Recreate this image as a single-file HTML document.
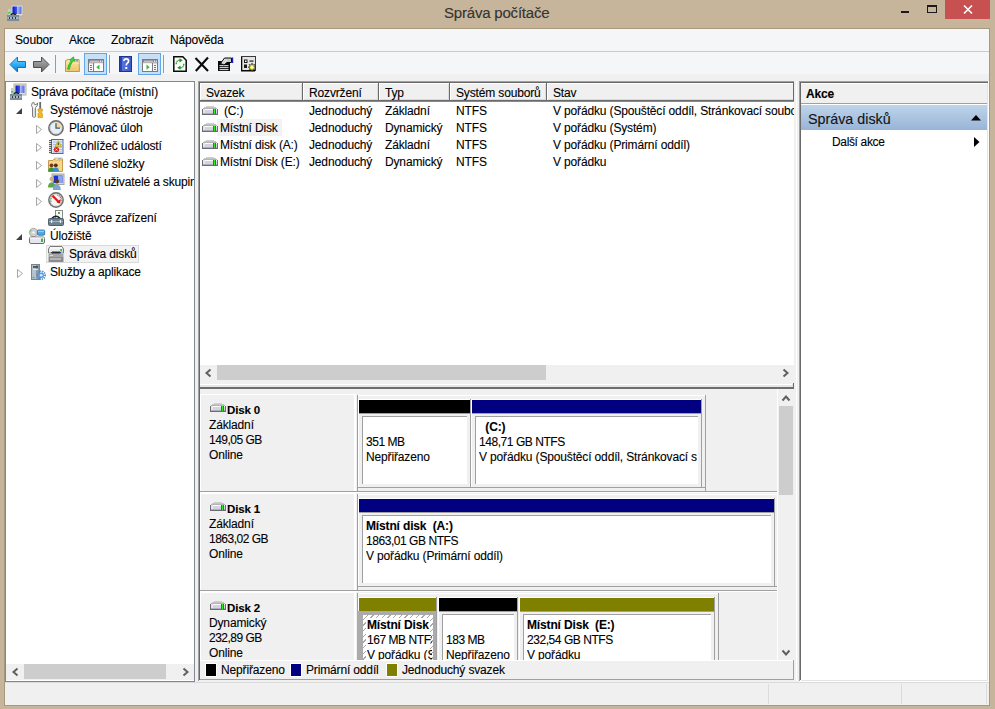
<!DOCTYPE html>
<html><head><meta charset="utf-8"><style>
*{box-sizing:border-box;margin:0;padding:0}
html,body{width:995px;height:709px;overflow:hidden}
body{background:#C6B59A;font-family:"Liberation Sans",sans-serif;font-size:11.5px;color:#000;position:relative}
.a{position:absolute}
.t{position:absolute;white-space:nowrap;line-height:16px;font-size:12px;letter-spacing:-0.15px;color:#000;-webkit-text-stroke:0.1px #000}
.b{font-weight:bold}
svg{position:absolute;overflow:visible}
</style></head><body>
<div class="t" style="left:444px;top:3px;font-size:15px;letter-spacing:-0.2px;line-height:20px;color:#363636">Správa počítače</div>
<svg style="left:7px;top:5px" width="16" height="16" viewBox="0 0 16 16">
<defs><linearGradient id="scra" x1="0" y1="0" x2="1" y2="0"><stop offset="0" stop-color="#0A10C8"/><stop offset="0.45" stop-color="#3A50E8"/><stop offset="0.55" stop-color="#A8B8F4"/><stop offset="1" stop-color="#5068E8"/></linearGradient></defs>
<rect x="4" y="0" width="12" height="11" fill="#E2E0D2"/><rect x="4" y="0" width="12" height="11" fill="none" stroke="#B4B2A6" stroke-width="1"/>
<rect x="5.5" y="1.5" width="9" height="7.5" fill="url(#scra)"/>
<path d="M3.5 10 Q6 7.3 9 10" stroke="#1A1A1A" stroke-width="1.4" fill="none"/>
<rect x="0" y="10" width="12" height="6" fill="#7C8C98"/><rect x="0.5" y="12" width="11" height="2" fill="#A8B6C0"/>
<rect x="2" y="12" width="1" height="2" fill="#303A44"/><rect x="5" y="12" width="1" height="2" fill="#303A44"/><rect x="8" y="12" width="1" height="2" fill="#303A44"/>
<rect x="1" y="4" width="2.5" height="6" fill="#C8CCCC"/><rect x="1" y="7" width="2.5" height="1.6" fill="#38E038"/></svg>
<div class="a" style="left:901px;top:11px;width:8px;height:2px;background:#1A1A1A"></div>
<div class="a" style="left:927px;top:5px;width:10px;height:8px;border:1px solid #1A1A1A;border-top-width:2px"></div>
<div class="a" style="left:945px;top:0px;width:45px;height:19px;background:#C75050"></div>
<svg style="left:963px;top:5px" width="10" height="9" viewBox="0 0 10 9"><path d="M1 0.5 L9 8.5 M9 0.5 L1 8.5" stroke="#fff" stroke-width="1.6"/></svg>
<div class="a" style="left:4px;top:28px;width:986px;height:678px;border:1px solid #A8987C;background:#F0F0F0"></div>
<div class="a" style="left:5px;top:29px;width:984px;height:22px;background:#F5F6F7"></div>
<div class="t" style="left:15px;top:32px;">Soubor</div>
<div class="t" style="left:69px;top:32px;">Akce</div>
<div class="t" style="left:111px;top:32px;">Zobrazit</div>
<div class="t" style="left:170px;top:32px;">Nápověda</div>
<div class="a" style="left:5px;top:51px;width:984px;height:1px;background:#C9CACB"></div>
<div class="a" style="left:5px;top:52px;width:984px;height:22px;background:#F5F6F7"></div>
<div class="a" style="left:55px;top:55px;width:1px;height:18px;background:#9A9A9A"></div>
<div class="a" style="left:109px;top:55px;width:1px;height:18px;background:#9A9A9A"></div>
<div class="a" style="left:163px;top:55px;width:1px;height:18px;background:#9A9A9A"></div>
<div class="a" style="left:84px;top:53px;width:23px;height:22px;background:#C8E0F7;border:1px solid #62A6EA"></div>
<div class="a" style="left:138px;top:53px;width:23px;height:22px;background:#C8E0F7;border:1px solid #62A6EA"></div>
<svg style="left:9px;top:56px" width="18" height="17" viewBox="0 0 18 17">
<defs><linearGradient id="gb" x1="0" y1="0" x2="0" y2="1"><stop offset="0" stop-color="#7ED6FF"/><stop offset="0.5" stop-color="#2EB0F8"/><stop offset="1" stop-color="#0A70D0"/></linearGradient></defs>
<path d="M1 8.5 L8.5 1 L8.5 5.5 L16.5 5.5 L16.5 11.5 L8.5 11.5 L8.5 16 Z" fill="url(#gb)" stroke="#1A6CC0" stroke-width="1" stroke-linejoin="round"/></svg>
<svg style="left:32px;top:56px" width="18" height="17" viewBox="0 0 18 17">
<defs><linearGradient id="gg" x1="0" y1="0" x2="0" y2="1"><stop offset="0" stop-color="#B4B4B4"/><stop offset="0.5" stop-color="#909090"/><stop offset="1" stop-color="#6A6A6A"/></linearGradient></defs>
<path d="M17 8.5 L9.5 1 L9.5 5.5 L1.5 5.5 L1.5 11.5 L9.5 11.5 L9.5 16 Z" fill="url(#gg)" stroke="#4E4E4E" stroke-width="1" stroke-linejoin="round"/></svg>
<svg style="left:65px;top:56px" width="15" height="16" viewBox="0 0 15 16">
<defs><linearGradient id="gf" x1="0" y1="0" x2="0" y2="1"><stop offset="0" stop-color="#FBE7AE"/><stop offset="1" stop-color="#EBC466"/></linearGradient></defs>
<path d="M0.5 4.5 L3 3.5 L14 3.5 L14.5 15.5 L0.5 15.5 Z" fill="url(#gf)" stroke="#BF9A48" stroke-width="1"/>
<rect x="1" y="7" width="13" height="1" fill="#F8E2A0"/><rect x="10.5" y="4.2" width="2.5" height="1.2" fill="#5A8CE0"/>
<path d="M2.5 13 Q3.5 8 6 5 L4.8 3.8 L8.5 0.8 L9.8 5.4 L8 4.8 Q5.5 8.5 4.2 13.5 Z" fill="#3ECF3A" stroke="#20A020" stroke-width="0.6"/></svg>
<svg style="left:88px;top:59px" width="16" height="13" viewBox="0 0 16 13">
<rect x="0.5" y="0.5" width="15" height="12" fill="#F6F6F6" stroke="#7C7C80"/>
<rect x="1" y="1" width="14" height="2.4" fill="#8A8A90"/><rect x="2" y="1.8" width="9" height="0.8" fill="#E8E8E8"/>
<rect x="12" y="1.6" width="1" height="1.2" fill="#fff"/><rect x="13.8" y="1.6" width="1" height="1.2" fill="#fff"/>
<rect x="1" y="3.4" width="14" height="1" fill="#A8A8AC"/><rect x="2" y="6" width="2" height="1" fill="#4A7EC0"/><rect x="2" y="8" width="2" height="1" fill="#4A7EC0"/><rect x="2" y="10" width="2" height="1" fill="#4A7EC0"/>
<rect x="5" y="4" width="1.2" height="8.5" fill="#7C7C80"/><rect x="6.2" y="4.4" width="8.8" height="7.6" fill="#fff"/><path d="M11.5 5.6 L8.3 8.2 L11.5 10.8 Z" fill="#3CB83C"/></svg>
<svg style="left:142px;top:59px" width="16" height="13" viewBox="0 0 16 13">
<rect x="0.5" y="0.5" width="15" height="12" fill="#F6F6F6" stroke="#7C7C80"/>
<rect x="1" y="1" width="14" height="2.4" fill="#8A8A90"/><rect x="2" y="1.8" width="9" height="0.8" fill="#E8E8E8"/>
<rect x="12" y="1.6" width="1" height="1.2" fill="#fff"/><rect x="13.8" y="1.6" width="1" height="1.2" fill="#fff"/>
<rect x="1" y="3.4" width="14" height="1" fill="#A8A8AC"/><rect x="12" y="6" width="2" height="1" fill="#4A7EC0"/><rect x="12" y="8" width="2" height="1" fill="#4A7EC0"/><rect x="12" y="10" width="2" height="1" fill="#4A7EC0"/>
<rect x="9.8" y="4" width="1.2" height="8.5" fill="#7C7C80"/><rect x="1" y="4.4" width="8.8" height="7.6" fill="#fff"/><path d="M4.5 5.6 L7.7 8.2 L4.5 10.8 Z" fill="#3CB83C"/></svg>
<svg style="left:119px;top:56px" width="13" height="16" viewBox="0 0 13 16">
<defs><linearGradient id="gh" x1="0" y1="0" x2="1" y2="0"><stop offset="0" stop-color="#5C7CE8"/><stop offset="1" stop-color="#3A58C8"/></linearGradient></defs>
<rect x="0" y="0" width="13" height="16" fill="#1E3290"/><rect x="1" y="1" width="11" height="14" fill="url(#gh)"/><rect x="1" y="1" width="2" height="14" fill="#2A44B0"/>
<path d="M5 5 Q5 2.8 7.2 2.8 Q9.6 2.8 9.6 5 Q9.6 6.4 8.2 7.2 Q7.3 7.8 7.3 9.6" fill="none" stroke="#fff" stroke-width="1.7"/><rect x="6.3" y="11" width="2" height="2" fill="#fff"/></svg>
<svg style="left:173px;top:56px" width="14" height="16" viewBox="0 0 14 16">
<path d="M0.8 0.8 L9.8 0.8 L13.2 4.2 L13.2 15.2 L0.8 15.2 Z" fill="#fff" stroke="#0A0A0A" stroke-width="1.5"/>
<path d="M3.2 8.2 Q3.2 4.2 7 4.2" fill="none" stroke="#1E9A1E" stroke-width="1.3" stroke-dasharray="1.6 0.7"/><path d="M6.5 2.2 L9.8 4.3 L6.5 6.4 Z" fill="#1E9A1E"/>
<path d="M10.8 7.8 Q10.8 11.8 7 11.8" fill="none" stroke="#1E9A1E" stroke-width="1.3" stroke-dasharray="1.6 0.7"/><path d="M7.5 9.6 L4.2 11.7 L7.5 13.8 Z" fill="#1E9A1E"/></svg>
<svg style="left:195px;top:57px" width="14" height="15" viewBox="0 0 14 15"><path d="M0.5 1 L13 14 M13 0.5 L0.8 14" stroke="#0A0A0A" stroke-width="2.1"/></svg>
<svg style="left:218px;top:56px" width="16" height="16" viewBox="0 0 16 16">
<rect x="0" y="5" width="12" height="10" fill="#0A0A0A"/><rect x="1.5" y="9" width="9" height="1.2" fill="#C8C8C8"/>
<rect x="1.5" y="11.2" width="9" height="0.9" fill="#fff"/><rect x="1.5" y="13.2" width="9" height="0.9" fill="#fff"/>
<path d="M2.5 7.5 L6.5 2 L13.5 2 L13.5 6.5 L9 6.5 L6 9 Z" fill="#C8C8C8" stroke="#0A0A0A" stroke-width="1"/>
<path d="M4 7 L7.5 3 M6 7.5 L9 4" stroke="#fff" stroke-width="0.7"/>
<rect x="14" y="1.5" width="1.2" height="5.5" fill="#1A1AC8"/></svg>
<svg style="left:241px;top:56px" width="16" height="16" viewBox="0 0 16 16">
<rect x="0.5" y="0.5" width="14" height="14" fill="#E4E4E4" stroke="#3A3A3A" stroke-width="1"/>
<rect x="0" y="14" width="14" height="1.5" fill="#0A0A0A"/><rect x="0" y="1" width="1.3" height="14" fill="#0A0A0A"/>
<rect x="3" y="3.5" width="3.5" height="3.5" fill="#1A1A1A"/><rect x="4" y="4.5" width="1.5" height="1.5" fill="#fff"/><rect x="8.5" y="4.5" width="4" height="1.2" fill="#1A1A1A"/>
<rect x="3" y="8.5" width="3" height="3.5" fill="#1A1A1A"/>
<path d="M11 7 L11.8 9 L13.8 8.4 L13 10.4 L15 11.2 L13 12.1 L13.8 14 L11.8 13.4 L11 15.5 L10.2 13.4 L8.2 14 L9 12.1 L7 11.2 L9 10.4 L8.2 8.4 L10.2 9 Z" fill="#F0E81C" stroke="#1A1A1A" stroke-width="0.6"/><circle cx="11" cy="11.2" r="1.2" fill="#fff"/></svg>
<div class="a" style="left:5px;top:81px;width:190px;height:601px;border:1px solid #828790;background:#fff"></div>
<div class="a" style="left:46px;top:245px;width:93px;height:18px;background:#F2F2F2;border:1px solid #DADADA"></div>
<div class="a" style="left:6px;top:82px;width:188px;height:580px;overflow:hidden">
<div class="t" style="left:25px;top:2px">Správa počítače (místní)</div>
<div class="t" style="left:44px;top:20px">Systémové nástroje</div>
<div class="t" style="left:63px;top:38px">Plánovač úloh</div>
<div class="t" style="left:63px;top:56px">Prohlížeč událostí</div>
<div class="t" style="left:63px;top:74px">Sdílené složky</div>
<div class="t" style="left:63px;top:92px">Místní uživatelé a skupiny</div>
<div class="t" style="left:63px;top:110px">Výkon</div>
<div class="t" style="left:63px;top:128px">Správce zařízení</div>
<div class="t" style="left:44px;top:146px">Úložiště</div>
<div class="t" style="left:63px;top:164px">Správa disků</div>
<div class="t" style="left:44px;top:182px">Služby a aplikace</div>
</div>
<svg style="left:16px;top:108px" width="6" height="6" viewBox="0 0 6 6"><path d="M6 0 L6 6 L0 6 Z" fill="#404040"/></svg>
<svg style="left:16px;top:234px" width="6" height="6" viewBox="0 0 6 6"><path d="M6 0 L6 6 L0 6 Z" fill="#404040"/></svg>
<svg style="left:36px;top:125px" width="6" height="9" viewBox="0 0 6 9"><path d="M0.5 0.5 L5.5 4.5 L0.5 8.5 Z" fill="none" stroke="#A6A6A6" stroke-width="1"/></svg>
<svg style="left:36px;top:143px" width="6" height="9" viewBox="0 0 6 9"><path d="M0.5 0.5 L5.5 4.5 L0.5 8.5 Z" fill="none" stroke="#A6A6A6" stroke-width="1"/></svg>
<svg style="left:36px;top:161px" width="6" height="9" viewBox="0 0 6 9"><path d="M0.5 0.5 L5.5 4.5 L0.5 8.5 Z" fill="none" stroke="#A6A6A6" stroke-width="1"/></svg>
<svg style="left:36px;top:179px" width="6" height="9" viewBox="0 0 6 9"><path d="M0.5 0.5 L5.5 4.5 L0.5 8.5 Z" fill="none" stroke="#A6A6A6" stroke-width="1"/></svg>
<svg style="left:36px;top:197px" width="6" height="9" viewBox="0 0 6 9"><path d="M0.5 0.5 L5.5 4.5 L0.5 8.5 Z" fill="none" stroke="#A6A6A6" stroke-width="1"/></svg>
<svg style="left:17px;top:269px" width="6" height="9" viewBox="0 0 6 9"><path d="M0.5 0.5 L5.5 4.5 L0.5 8.5 Z" fill="none" stroke="#A6A6A6" stroke-width="1"/></svg>
<svg style="left:10px;top:84px" width="16" height="16" viewBox="0 0 16 16">
<defs><linearGradient id="scrb" x1="0" y1="0" x2="1" y2="0"><stop offset="0" stop-color="#0A10C8"/><stop offset="0.45" stop-color="#3A50E8"/><stop offset="0.55" stop-color="#A8B8F4"/><stop offset="1" stop-color="#5068E8"/></linearGradient></defs>
<rect x="4" y="0" width="12" height="11" fill="#E2E0D2"/><rect x="4" y="0" width="12" height="11" fill="none" stroke="#B4B2A6" stroke-width="1"/>
<rect x="5.5" y="1.5" width="9" height="7.5" fill="url(#scrb)"/>
<path d="M3.5 10 Q6 7.3 9 10" stroke="#1A1A1A" stroke-width="1.4" fill="none"/>
<rect x="0" y="10" width="12" height="6" fill="#7C8C98"/><rect x="0.5" y="12" width="11" height="2" fill="#A8B6C0"/>
<rect x="2" y="12" width="1" height="2" fill="#303A44"/><rect x="5" y="12" width="1" height="2" fill="#303A44"/><rect x="8" y="12" width="1" height="2" fill="#303A44"/>
<rect x="1" y="4" width="2.5" height="6" fill="#C8CCCC"/><rect x="1" y="7" width="2.5" height="1.6" fill="#38E038"/></svg>
<svg style="left:31px;top:102px" width="12" height="16" viewBox="0 0 12 16">
<path d="M1.2 1 Q-0.3 3.8 1.5 5.6 L1.5 14.6 Q3 16.2 4.6 14.6 L4.6 5.6 Q7.2 4 6.6 0.8 L5.2 2.8 L3.4 2.4 L2.8 0.2 Z" fill="#F4F4F4" stroke="#6E6E6E" stroke-width="0.9"/>
<rect x="2.6" y="6.5" width="1" height="7.5" fill="#C8C8C8"/>
<rect x="8.3" y="0" width="1.8" height="7" fill="#6A6A6A"/><rect x="8.3" y="6" width="1.8" height="1" fill="#8AA0D0"/>
<path d="M7 7 L11.4 7 L11.4 9 L10.4 10 L10.4 10.6 L11.4 11.6 L11.4 15.6 L7 15.6 L7 11.6 L8 10.6 L8 10 L7 9 Z" fill="#F2BC18" stroke="#C08800" stroke-width="0.6"/></svg>
<svg style="left:48px;top:120px" width="16" height="16" viewBox="0 0 16 16">
<circle cx="8" cy="8" r="7.1" fill="#E6EEF6" stroke="#6E6E6E" stroke-width="1.6"/>
<circle cx="8" cy="8" r="6" fill="none" stroke="#B8B8B8" stroke-width="0.6"/>
<path d="M8 2.2 A5.8 5.8 0 0 1 13.8 8 L8 8 Z" fill="#F0DC9C"/>
<path d="M8 3.2 L8 8.2 L12 8.2" fill="none" stroke="#405878" stroke-width="1.3"/></svg>
<svg style="left:47px;top:137px" width="18" height="18" viewBox="0 0 18 18">
<rect x="4.5" y="2.5" width="11.5" height="14" fill="#DCE8F6" stroke="#4A68AE" stroke-width="1"/>
<rect x="6" y="4.5" width="9" height="1" fill="#A8C0E4"/><rect x="6" y="7" width="9" height="1" fill="#A8C0E4"/><rect x="6" y="9.5" width="9" height="1" fill="#A8C0E4"/><rect x="6" y="12" width="9" height="1" fill="#A8C0E4"/><rect x="6" y="14.5" width="9" height="1" fill="#A8C0E4"/>
<rect x="2" y="3" width="3" height="1.2" fill="#5E5E5E"/><rect x="2" y="5" width="3" height="1.2" fill="#5E5E5E"/><rect x="2" y="7" width="3" height="1.2" fill="#5E5E5E"/><rect x="2" y="9" width="3" height="1.2" fill="#5E5E5E"/><rect x="2" y="11" width="3" height="1.2" fill="#5E5E5E"/><rect x="2" y="13" width="3" height="1.2" fill="#5E5E5E"/><rect x="2" y="15" width="3" height="1.2" fill="#5E5E5E"/>
<path d="M11.3 3.8 L14.6 9.6 L8 9.6 Z" fill="#F2D418" stroke="#B89A10" stroke-width="0.6"/><rect x="10.8" y="5.6" width="1" height="2.6" fill="#303030"/>
<circle cx="9.5" cy="12.6" r="2.6" fill="#D21E1E"/><path d="M8.5 11.6 L10.5 13.6 M10.5 11.6 L8.5 13.6" stroke="#fff" stroke-width="0.8"/></svg>
<svg style="left:48px;top:157px" width="15" height="15" viewBox="0 0 15 15">
<path d="M0.5 3.5 L5 3.5 L6 2 L14.5 2 L14.5 14.5 L0.5 14.5 Z" fill="#F4D68C" stroke="#C49A4C" stroke-width="1"/>
<rect x="7" y="1" width="7" height="2" fill="#FBF0C8" stroke="#C49A4C" stroke-width="0.6"/><rect x="10" y="1.5" width="3" height="0.8" fill="#6A8AD0"/>
<circle cx="3.5" cy="8.3" r="1.9" fill="#6E3E1E"/><path d="M0.3 14.8 Q0.3 10.5 3.5 10.5 Q6.5 10.5 6.5 14.8 Z" fill="#2C9A3C"/>
<circle cx="7.8" cy="8.3" r="1.9" fill="#5A2E14"/><path d="M4.6 14.8 Q4.6 10.5 7.8 10.5 Q11 10.5 11 14.8 Z" fill="#3A8CCC"/></svg>
<svg style="left:48px;top:174px" width="16" height="16" viewBox="0 0 16 16">
<rect x="4" y="0" width="12" height="10.5" fill="#DCDAD0"/><rect x="4" y="0" width="12" height="10.5" fill="none" stroke="#A8A69C" stroke-width="1"/>
<rect x="5.5" y="1.5" width="9" height="7.5" fill="#1A30D8"/><rect x="10" y="1.5" width="4.5" height="7.5" fill="#8CA2F2"/>
<circle cx="3.8" cy="5" r="2.3" fill="#C8B078"/><path d="M0 13.5 Q0 8.5 3.8 8.5 Q7.2 8.5 7.2 13.5 Z" fill="#5AA848"/>
<circle cx="8.8" cy="7.3" r="2.3" fill="#5A3A1E"/><path d="M4.8 16 Q4.8 10.8 8.8 10.8 Q12.8 10.8 12.8 16 Z" fill="#7AA6D6"/></svg>
<svg style="left:48px;top:192px" width="16" height="16" viewBox="0 0 16 16">
<circle cx="8" cy="8" r="7.1" fill="#F6F6F6" stroke="#707070" stroke-width="1.6"/>
<circle cx="8" cy="8" r="6" fill="none" stroke="#C0C0C0" stroke-width="0.6"/>
<path d="M3.2 10 A5 5 0 0 1 6 3.4" fill="none" stroke="#3A8A5A" stroke-width="1.2" stroke-dasharray="0.8 0.8"/>
<path d="M9.5 3.2 A5 5 0 0 1 12.8 10" fill="none" stroke="#D83030" stroke-width="1.2" stroke-dasharray="0.8 0.8"/>
<path d="M4.6 3.8 L11.2 10.6" stroke="#E01818" stroke-width="2.2"/><path d="M12.6 7 L12.2 11.6 L8.6 10.6 Z" fill="#D01818"/></svg>
<svg style="left:48px;top:210px" width="16" height="16" viewBox="0 0 16 16">
<rect x="7.5" y="0.5" width="7" height="8" fill="#F8F8F8" stroke="#8A8A8A"/><rect x="10" y="2" width="2" height="2" fill="#40C030"/>
<path d="M4 8.3 Q8 4.2 12 8.3" fill="none" stroke="#222" stroke-width="1.5"/>
<rect x="0.5" y="8.5" width="15" height="7" rx="1" fill="#6C8292" stroke="#50626E"/>
<rect x="1" y="11" width="14" height="1" fill="#A4B2BC"/><rect x="3" y="10" width="1.2" height="3" fill="#E8EEF2"/><rect x="11.8" y="10" width="1.2" height="3" fill="#E8EEF2"/></svg>
<svg style="left:29px;top:228px" width="16" height="16" viewBox="0 0 16 16">
<circle cx="4.5" cy="4.5" r="4.2" fill="#CFCFCF" stroke="#9A9A9A" stroke-width="0.7"/><circle cx="4.5" cy="4.5" r="1.1" fill="#fff"/><rect x="1.2" y="2.2" width="1.2" height="1.2" fill="#40D040"/>
<rect x="8.3" y="2" width="7.4" height="5.2" rx="1.2" fill="#52A6E2" stroke="#2A6AA8" stroke-width="0.8"/><rect x="9" y="2.8" width="6" height="1" fill="#A8D4F4"/>
<rect x="0.5" y="9" width="15" height="6.5" rx="1.5" fill="#E6E6EE" stroke="#707078"/><rect x="1" y="9.5" width="14" height="1" fill="#fff"/><rect x="12" y="10.5" width="2" height="3.5" fill="#30C030"/></svg>
<svg style="left:48px;top:246px" width="16" height="16" viewBox="0 0 16 16">
<path d="M2 0.5 L14 0.5 L15.5 3 L15.5 7 L0.5 7 L0.5 3 Z" fill="#EDEDED" stroke="#7A7A7A"/><rect x="2" y="1.5" width="12" height="1" fill="#fff"/>
<rect x="12.2" y="3" width="2" height="2.5" fill="#40C030"/>
<rect x="4" y="5.5" width="8" height="2" fill="#2A2A2A"/><rect x="3" y="6" width="1.2" height="1.2" fill="#2040C8"/><rect x="11.8" y="6" width="1.2" height="1.2" fill="#2040C8"/>
<rect x="0.5" y="8" width="15" height="3" fill="#A6A6A6"/><rect x="0.5" y="11" width="15" height="5" fill="#8C8C8C"/>
<rect x="2" y="12.5" width="11" height="1" fill="#E0E0E0"/><rect x="2" y="9" width="3" height="1" fill="#DDD"/></svg>
<svg style="left:31px;top:264px" width="15" height="16" viewBox="0 0 15 16">
<rect x="0.5" y="0.5" width="8" height="15" fill="#B4C2CC" stroke="#76868F"/><rect x="5" y="1" width="3" height="14" fill="#8E9EA8"/>
<rect x="2" y="2.2" width="5" height="1.5" fill="#34424C"/><rect x="2" y="5" width="5" height="0.8" fill="#EEF2F4"/><rect x="1.5" y="13" width="2" height="1.2" fill="#40C040"/>
<circle cx="10.2" cy="11.2" r="3.9" fill="none" stroke="#4A8AD4" stroke-width="1.8" stroke-dasharray="1.2 0.9"/>
<circle cx="10.2" cy="11.2" r="2.8" fill="#5C9CE0"/><circle cx="10.2" cy="11.2" r="1.3" fill="#E4EEF8"/></svg>
<div class="a" style="left:6px;top:664px;width:188px;height:16px;background:#F0F0F0"></div>
<div class="a" style="left:24px;top:664px;width:142px;height:15px;background:#CDCDCD"></div>
<svg style="left:12px;top:668px" width="7" height="8" viewBox="0 0 7 8"><path d="M5.5 0.5 L1.5 4 L5.5 7.5" fill="none" stroke="#606060" stroke-width="2"/></svg>
<svg style="left:182px;top:668px" width="7" height="8" viewBox="0 0 7 8"><path d="M1.5 0.5 L5.5 4 L1.5 7.5" fill="none" stroke="#606060" stroke-width="2"/></svg>
<div class="a" style="left:198px;top:81px;width:599px;height:601px;background:#F0F0F0"></div>
<div class="a" style="left:198px;top:81px;width:599px;height:1px;background:#A0A0A0"></div>
<div class="a" style="left:198px;top:81px;width:1px;height:600px;background:#A0A0A0"></div>
<div class="a" style="left:199px;top:82px;width:597px;height:1px;background:#696969"></div>
<div class="a" style="left:199px;top:82px;width:1px;height:598px;background:#696969"></div>
<div class="a" style="left:200px;top:83px;width:594px;height:300px;background:#fff"></div>
<div class="a" style="left:200px;top:83px;width:594px;height:17px;background:#F0F0F0;border-top:1px solid #fff"></div>
<div class="a" style="left:200px;top:99px;width:594px;height:1px;background:#DCDCDC"></div>
<div class="a" style="left:200px;top:100px;width:594px;height:1px;background:#6A6A6A"></div>
<div class="a" style="left:200px;top:101px;width:594px;height:1px;background:#8A8A8A"></div>
<div class="a" style="left:200px;top:84px;width:1px;height:16px;background:#fff"></div>
<div class="a" style="left:301px;top:84px;width:1px;height:16px;background:#DCDCDC"></div>
<div class="a" style="left:302px;top:83px;width:1px;height:17px;background:#6A6A6A"></div>
<div class="a" style="left:303px;top:83px;width:1px;height:17px;background:#fff"></div>
<div class="a" style="left:377px;top:84px;width:1px;height:16px;background:#DCDCDC"></div>
<div class="a" style="left:378px;top:83px;width:1px;height:17px;background:#6A6A6A"></div>
<div class="a" style="left:379px;top:83px;width:1px;height:17px;background:#fff"></div>
<div class="a" style="left:448px;top:84px;width:1px;height:16px;background:#DCDCDC"></div>
<div class="a" style="left:449px;top:83px;width:1px;height:17px;background:#6A6A6A"></div>
<div class="a" style="left:450px;top:83px;width:1px;height:17px;background:#fff"></div>
<div class="a" style="left:545px;top:84px;width:1px;height:16px;background:#DCDCDC"></div>
<div class="a" style="left:546px;top:83px;width:1px;height:17px;background:#6A6A6A"></div>
<div class="a" style="left:547px;top:83px;width:1px;height:17px;background:#fff"></div>
<div class="a" style="left:793px;top:83px;width:1px;height:18px;background:#6A6A6A"></div>
<div class="t" style="left:206px;top:85px;">Svazek</div>
<div class="t" style="left:309px;top:85px;">Rozvržení</div>
<div class="t" style="left:385px;top:85px;">Typ</div>
<div class="t" style="left:456px;top:85px;">Systém souborů</div>
<div class="t" style="left:553px;top:85px;">Stav</div>
<div class="a" style="left:217px;top:119px;width:65px;height:17px;background:#F2F2F2"></div>
<div class="a" style="left:200px;top:102px;width:594px;height:80px;overflow:hidden">
<div class="t" style="left:24px;top:1px">(C:)</div>
<div class="t" style="left:109px;top:1px">Jednoduchý</div>
<div class="t" style="left:185px;top:1px">Základní</div>
<div class="t" style="left:256px;top:1px">NTFS</div>
<div class="t" style="left:353px;top:1px">V pořádku (Spouštěcí oddíl, Stránkovací soubor, Výpis stavu systému, Primární oddíl)</div>
<svg style="left:2px;top:4px" width="16" height="9" viewBox="0 0 16 9">
<rect x="4" y="0" width="8" height="1" fill="#CFCFCF"/><rect x="2" y="1" width="12" height="1" fill="#C4C4C4"/><rect x="1" y="2" width="14" height="1" fill="#B4B4B8"/>
<rect x="0" y="3" width="16" height="6" fill="#6C6C74"/><rect x="1" y="3" width="14" height="5" fill="#D4D4E0"/>
<rect x="1" y="3" width="14" height="1" fill="#FBFBFB"/><rect x="1" y="3" width="2" height="5" fill="#E6E6EA"/><rect x="1" y="7" width="14" height="1" fill="#B0B0B8"/>
<rect x="11" y="3" width="3" height="5" fill="#4A3A5A"/><rect x="11.7" y="3" width="1.6" height="5" fill="#30EE20"/></svg>
<div class="t" style="left:20px;top:18px">Místní Disk</div>
<div class="t" style="left:109px;top:18px">Jednoduchý</div>
<div class="t" style="left:185px;top:18px">Dynamický</div>
<div class="t" style="left:256px;top:18px">NTFS</div>
<div class="t" style="left:353px;top:18px">V pořádku (Systém)</div>
<svg style="left:2px;top:21px" width="16" height="9" viewBox="0 0 16 9">
<rect x="4" y="0" width="8" height="1" fill="#CFCFCF"/><rect x="2" y="1" width="12" height="1" fill="#C4C4C4"/><rect x="1" y="2" width="14" height="1" fill="#B4B4B8"/>
<rect x="0" y="3" width="16" height="6" fill="#6C6C74"/><rect x="1" y="3" width="14" height="5" fill="#D4D4E0"/>
<rect x="1" y="3" width="14" height="1" fill="#FBFBFB"/><rect x="1" y="3" width="2" height="5" fill="#E6E6EA"/><rect x="1" y="7" width="14" height="1" fill="#B0B0B8"/>
<rect x="11" y="3" width="3" height="5" fill="#4A3A5A"/><rect x="11.7" y="3" width="1.6" height="5" fill="#30EE20"/></svg>
<div class="t" style="left:20px;top:35px">Místní disk (A:)</div>
<div class="t" style="left:109px;top:35px">Jednoduchý</div>
<div class="t" style="left:185px;top:35px">Základní</div>
<div class="t" style="left:256px;top:35px">NTFS</div>
<div class="t" style="left:353px;top:35px">V pořádku (Primární oddíl)</div>
<svg style="left:2px;top:38px" width="16" height="9" viewBox="0 0 16 9">
<rect x="4" y="0" width="8" height="1" fill="#CFCFCF"/><rect x="2" y="1" width="12" height="1" fill="#C4C4C4"/><rect x="1" y="2" width="14" height="1" fill="#B4B4B8"/>
<rect x="0" y="3" width="16" height="6" fill="#6C6C74"/><rect x="1" y="3" width="14" height="5" fill="#D4D4E0"/>
<rect x="1" y="3" width="14" height="1" fill="#FBFBFB"/><rect x="1" y="3" width="2" height="5" fill="#E6E6EA"/><rect x="1" y="7" width="14" height="1" fill="#B0B0B8"/>
<rect x="11" y="3" width="3" height="5" fill="#4A3A5A"/><rect x="11.7" y="3" width="1.6" height="5" fill="#30EE20"/></svg>
<div class="t" style="left:20px;top:52px">Místní Disk (E:)</div>
<div class="t" style="left:109px;top:52px">Jednoduchý</div>
<div class="t" style="left:185px;top:52px">Dynamický</div>
<div class="t" style="left:256px;top:52px">NTFS</div>
<div class="t" style="left:353px;top:52px">V pořádku</div>
<svg style="left:2px;top:55px" width="16" height="9" viewBox="0 0 16 9">
<rect x="4" y="0" width="8" height="1" fill="#CFCFCF"/><rect x="2" y="1" width="12" height="1" fill="#C4C4C4"/><rect x="1" y="2" width="14" height="1" fill="#B4B4B8"/>
<rect x="0" y="3" width="16" height="6" fill="#6C6C74"/><rect x="1" y="3" width="14" height="5" fill="#D4D4E0"/>
<rect x="1" y="3" width="14" height="1" fill="#FBFBFB"/><rect x="1" y="3" width="2" height="5" fill="#E6E6EA"/><rect x="1" y="7" width="14" height="1" fill="#B0B0B8"/>
<rect x="11" y="3" width="3" height="5" fill="#4A3A5A"/><rect x="11.7" y="3" width="1.6" height="5" fill="#30EE20"/></svg>
</div>
<div class="a" style="left:200px;top:365px;width:594px;height:18px;background:#F0F0F0"></div>
<div class="a" style="left:217px;top:365px;width:329px;height:15px;background:#CDCDCD"></div>
<svg style="left:205px;top:368.5px" width="7" height="8" viewBox="0 0 7 8"><path d="M5.5 0.5 L1.5 4 L5.5 7.5" fill="none" stroke="#606060" stroke-width="2"/></svg>
<svg style="left:782px;top:368.5px" width="7" height="8" viewBox="0 0 7 8"><path d="M1.5 0.5 L5.5 4 L1.5 7.5" fill="none" stroke="#606060" stroke-width="2"/></svg>
<div class="a" style="left:200px;top:384px;width:593px;height:1px;background:#fff"></div>
<div class="a" style="left:200px;top:385px;width:593px;height:2px;background:#E6E6E6"></div>
<div class="a" style="left:792px;top:384px;width:1px;height:3px;background:#E0E0E0"></div>
<div class="a" style="left:793px;top:383px;width:1px;height:6px;background:#6E6E6E"></div>
<div class="a" style="left:200px;top:387px;width:594px;height:2px;background:#6E6E6E"></div>
<div class="a" style="left:777px;top:389px;width:1px;height:271px;background:#fff"></div>
<div class="a" style="left:778px;top:389px;width:16px;height:271px;background:#F0F0F0"></div>
<div class="a" style="left:779px;top:406px;width:14px;height:89px;background:#CDCDCD"></div>
<svg style="left:782px;top:395px" width="8" height="7" viewBox="0 0 8 7"><path d="M0.5 5.5 L4 1.5 L7.5 5.5" fill="none" stroke="#606060" stroke-width="2"/></svg>
<svg style="left:782px;top:649px" width="8" height="7" viewBox="0 0 8 7"><path d="M0.5 1.5 L4 5.5 L7.5 1.5" fill="none" stroke="#606060" stroke-width="2"/></svg>
<div class="a" style="left:200px;top:389px;width:577px;height:271px;overflow:hidden;background:#F0F0F0">
<div class="a" style="left:1px;top:5px;width:153px;height:97px;background:#F0F0F0;border-top:1px solid #fff"></div>
<div class="a" style="left:0px;top:5px;width:1px;height:97px;background:#fff"></div>
<div class="a" style="left:154px;top:5px;width:2px;height:97px;background:#fff"></div>
<div class="a" style="left:157px;top:6px;width:1px;height:96px;background:#A0A0A0"></div>
<div class="a" style="left:0px;top:102px;width:577px;height:1px;background:#A0A0A0"></div>
<div class="a" style="left:0px;top:103px;width:577px;height:1px;background:#fff"></div>
<svg style="left:10px;top:14px" width="16" height="9" viewBox="0 0 16 9">
<rect x="4" y="0" width="8" height="1" fill="#CFCFCF"/><rect x="2" y="1" width="12" height="1" fill="#C4C4C4"/><rect x="1" y="2" width="14" height="1" fill="#B4B4B8"/>
<rect x="0" y="3" width="16" height="6" fill="#6C6C74"/><rect x="1" y="3" width="14" height="5" fill="#D4D4E0"/>
<rect x="1" y="3" width="14" height="1" fill="#FBFBFB"/><rect x="1" y="3" width="2" height="5" fill="#E6E6EA"/><rect x="1" y="7" width="14" height="1" fill="#B0B0B8"/>
<rect x="11" y="3" width="3" height="5" fill="#4A3A5A"/><rect x="11.7" y="3" width="1.6" height="5" fill="#30EE20"/></svg>
<div class="t" style="left:27px;top:13px;font-weight:bold;font-size:11.5px">Disk 0</div>
<div class="t" style="left:9px;top:28px;">Základní</div>
<div class="t" style="left:9px;top:43px;;letter-spacing:-0.5px">149,05 GB</div>
<div class="t" style="left:9px;top:58px;">Online</div>
<div class="a" style="left:158px;top:6px;width:347px;height:1px;background:#fff"></div>
<div class="a" style="left:505px;top:6px;width:1px;height:97px;background:#A0A0A0"></div>
<div class="a" style="left:158px;top:98px;width:347px;height:1px;background:#A0A0A0"></div>
<div class="a" style="left:158px;top:10px;width:112px;height:1px;background:#fff"></div>
<div class="a" style="left:159px;top:11px;width:111px;height:13px;background:#000"></div>
<div class="a" style="left:159px;top:24px;width:111px;height:1px;background:#A0A0A0"></div>
<div class="a" style="left:270px;top:10px;width:1px;height:89px;background:#A0A0A0"></div>
<div class="a" style="left:158px;top:11px;width:1px;height:87px;background:#fff"></div>
<div class="a" style="left:158px;top:98px;width:112px;height:1px;background:#A0A0A0"></div>
<div class="a" style="left:159px;top:25px;width:111px;height:73px;background:#F0F0F0"></div>
<div class="a" style="left:162px;top:27px;width:105px;height:68px;background:#fff;border-top:1px solid #A0A0A0;border-left:1px solid #A0A0A0"></div>
<div class="t" style="left:166px;top:45px;width:100px;overflow:hidden;letter-spacing:-0.45px;">351 MB</div>
<div class="t" style="left:166px;top:60px;width:100px;overflow:hidden;">Nepřiřazeno</div>
<div class="a" style="left:271px;top:10px;width:230px;height:1px;background:#fff"></div>
<div class="a" style="left:272px;top:11px;width:229px;height:13px;background:#000080"></div>
<div class="a" style="left:272px;top:24px;width:229px;height:1px;background:#A0A0A0"></div>
<div class="a" style="left:501px;top:10px;width:1px;height:89px;background:#A0A0A0"></div>
<div class="a" style="left:271px;top:11px;width:1px;height:87px;background:#fff"></div>
<div class="a" style="left:271px;top:98px;width:230px;height:1px;background:#A0A0A0"></div>
<div class="a" style="left:272px;top:25px;width:229px;height:73px;background:#F0F0F0"></div>
<div class="a" style="left:275px;top:27px;width:223px;height:68px;background:#fff;border-top:1px solid #A0A0A0;border-left:1px solid #A0A0A0"></div>
<div class="t" style="left:279px;top:30px;width:218px;overflow:hidden;font-weight:bold;">&nbsp;&nbsp;(C:)</div>
<div class="t" style="left:279px;top:45px;width:218px;overflow:hidden;letter-spacing:-0.45px;">148,71 GB NTFS</div>
<div class="t" style="left:279px;top:60px;width:218px;overflow:hidden;">V pořádku (Spouštěcí oddíl, Stránkovací soubor, Výpis stavu)</div>
<div class="a" style="left:1px;top:104px;width:153px;height:97px;background:#F0F0F0;border-top:1px solid #fff"></div>
<div class="a" style="left:0px;top:104px;width:1px;height:97px;background:#fff"></div>
<div class="a" style="left:154px;top:104px;width:2px;height:97px;background:#fff"></div>
<div class="a" style="left:157px;top:105px;width:1px;height:96px;background:#A0A0A0"></div>
<div class="a" style="left:0px;top:201px;width:577px;height:1px;background:#A0A0A0"></div>
<div class="a" style="left:0px;top:202px;width:577px;height:1px;background:#fff"></div>
<svg style="left:10px;top:113px" width="16" height="9" viewBox="0 0 16 9">
<rect x="4" y="0" width="8" height="1" fill="#CFCFCF"/><rect x="2" y="1" width="12" height="1" fill="#C4C4C4"/><rect x="1" y="2" width="14" height="1" fill="#B4B4B8"/>
<rect x="0" y="3" width="16" height="6" fill="#6C6C74"/><rect x="1" y="3" width="14" height="5" fill="#D4D4E0"/>
<rect x="1" y="3" width="14" height="1" fill="#FBFBFB"/><rect x="1" y="3" width="2" height="5" fill="#E6E6EA"/><rect x="1" y="7" width="14" height="1" fill="#B0B0B8"/>
<rect x="11" y="3" width="3" height="5" fill="#4A3A5A"/><rect x="11.7" y="3" width="1.6" height="5" fill="#30EE20"/></svg>
<div class="t" style="left:27px;top:112px;font-weight:bold;font-size:11.5px">Disk 1</div>
<div class="t" style="left:9px;top:127px;">Základní</div>
<div class="t" style="left:9px;top:142px;;letter-spacing:-0.5px">1863,02 GB</div>
<div class="t" style="left:9px;top:157px;">Online</div>
<div class="a" style="left:158px;top:105px;width:442px;height:1px;background:#fff"></div>
<div class="a" style="left:158px;top:197px;width:419px;height:1px;background:#A0A0A0"></div>
<div class="a" style="left:158px;top:109px;width:416px;height:1px;background:#fff"></div>
<div class="a" style="left:159px;top:110px;width:415px;height:13px;background:#000080"></div>
<div class="a" style="left:159px;top:123px;width:415px;height:1px;background:#A0A0A0"></div>
<div class="a" style="left:574px;top:109px;width:1px;height:89px;background:#A0A0A0"></div>
<div class="a" style="left:158px;top:110px;width:1px;height:87px;background:#fff"></div>
<div class="a" style="left:158px;top:197px;width:416px;height:1px;background:#A0A0A0"></div>
<div class="a" style="left:159px;top:124px;width:415px;height:73px;background:#F0F0F0"></div>
<div class="a" style="left:162px;top:126px;width:409px;height:68px;background:#fff;border-top:1px solid #A0A0A0;border-left:1px solid #A0A0A0"></div>
<div class="t" style="left:166px;top:129px;width:404px;overflow:hidden;font-weight:bold;">Místní disk&nbsp; (A:)</div>
<div class="t" style="left:166px;top:144px;width:404px;overflow:hidden;letter-spacing:-0.45px;">1863,01 GB NTFS</div>
<div class="t" style="left:166px;top:159px;width:404px;overflow:hidden;">V pořádku (Primární oddíl)</div>
<div class="a" style="left:1px;top:203px;width:153px;height:97px;background:#F0F0F0;border-top:1px solid #fff"></div>
<div class="a" style="left:0px;top:203px;width:1px;height:97px;background:#fff"></div>
<div class="a" style="left:154px;top:203px;width:2px;height:97px;background:#fff"></div>
<div class="a" style="left:157px;top:204px;width:1px;height:96px;background:#A0A0A0"></div>
<div class="a" style="left:0px;top:300px;width:577px;height:1px;background:#A0A0A0"></div>
<div class="a" style="left:0px;top:301px;width:577px;height:1px;background:#fff"></div>
<svg style="left:10px;top:212px" width="16" height="9" viewBox="0 0 16 9">
<rect x="4" y="0" width="8" height="1" fill="#CFCFCF"/><rect x="2" y="1" width="12" height="1" fill="#C4C4C4"/><rect x="1" y="2" width="14" height="1" fill="#B4B4B8"/>
<rect x="0" y="3" width="16" height="6" fill="#6C6C74"/><rect x="1" y="3" width="14" height="5" fill="#D4D4E0"/>
<rect x="1" y="3" width="14" height="1" fill="#FBFBFB"/><rect x="1" y="3" width="2" height="5" fill="#E6E6EA"/><rect x="1" y="7" width="14" height="1" fill="#B0B0B8"/>
<rect x="11" y="3" width="3" height="5" fill="#4A3A5A"/><rect x="11.7" y="3" width="1.6" height="5" fill="#30EE20"/></svg>
<div class="t" style="left:27px;top:211px;font-weight:bold;font-size:11.5px">Disk 2</div>
<div class="t" style="left:9px;top:226px;">Dynamický</div>
<div class="t" style="left:9px;top:241px;;letter-spacing:-0.5px">232,89 GB</div>
<div class="t" style="left:9px;top:256px;">Online</div>
<div class="a" style="left:158px;top:204px;width:360px;height:1px;background:#fff"></div>
<div class="a" style="left:518px;top:204px;width:1px;height:97px;background:#A0A0A0"></div>
<div class="a" style="left:158px;top:296px;width:360px;height:1px;background:#A0A0A0"></div>
<div class="a" style="left:158px;top:208px;width:78px;height:1px;background:#fff"></div>
<div class="a" style="left:159px;top:209px;width:77px;height:13px;background:#808000"></div>
<div class="a" style="left:159px;top:222px;width:77px;height:1px;background:#A0A0A0"></div>
<div class="a" style="left:236px;top:208px;width:1px;height:89px;background:#A0A0A0"></div>
<div class="a" style="left:158px;top:209px;width:1px;height:87px;background:#fff"></div>
<div class="a" style="left:158px;top:296px;width:78px;height:1px;background:#A0A0A0"></div>
<div class="a" style="left:157px;top:222px;width:79px;height:74px;background:#ABABAB"></div>
<div class="a" style="left:163px;top:226px;width:70px;height:70px;background:repeating-linear-gradient(135deg,#fff 0px,#fff 3px,#A8A8A8 3px,#A8A8A8 4px)"></div>
<div class="a" style="left:166px;top:229px;width:64px;height:70px;background:#fff"></div>
<div class="t" style="left:167px;top:228px;width:65px;overflow:hidden;font-weight:bold;">Místní Disk</div>
<div class="t" style="left:167px;top:243px;width:65px;overflow:hidden;letter-spacing:-0.45px;">167 MB NTFS</div>
<div class="t" style="left:167px;top:258px;width:65px;overflow:hidden;">V pořádku (Systém)</div>
<div class="a" style="left:238px;top:208px;width:79px;height:1px;background:#fff"></div>
<div class="a" style="left:239px;top:209px;width:78px;height:13px;background:#000"></div>
<div class="a" style="left:239px;top:222px;width:78px;height:1px;background:#A0A0A0"></div>
<div class="a" style="left:317px;top:208px;width:1px;height:89px;background:#A0A0A0"></div>
<div class="a" style="left:238px;top:209px;width:1px;height:87px;background:#fff"></div>
<div class="a" style="left:238px;top:296px;width:79px;height:1px;background:#A0A0A0"></div>
<div class="a" style="left:239px;top:223px;width:78px;height:73px;background:#F0F0F0"></div>
<div class="a" style="left:242px;top:225px;width:72px;height:68px;background:#fff;border-top:1px solid #A0A0A0;border-left:1px solid #A0A0A0"></div>
<div class="t" style="left:246px;top:243px;width:67px;overflow:hidden;letter-spacing:-0.45px;">183 MB</div>
<div class="t" style="left:246px;top:258px;width:67px;overflow:hidden;">Nepřiřazeno</div>
<div class="a" style="left:319px;top:208px;width:195px;height:1px;background:#fff"></div>
<div class="a" style="left:320px;top:209px;width:194px;height:13px;background:#808000"></div>
<div class="a" style="left:320px;top:222px;width:194px;height:1px;background:#A0A0A0"></div>
<div class="a" style="left:514px;top:208px;width:1px;height:89px;background:#A0A0A0"></div>
<div class="a" style="left:319px;top:209px;width:1px;height:87px;background:#fff"></div>
<div class="a" style="left:319px;top:296px;width:195px;height:1px;background:#A0A0A0"></div>
<div class="a" style="left:320px;top:223px;width:194px;height:73px;background:#F0F0F0"></div>
<div class="a" style="left:323px;top:225px;width:188px;height:68px;background:#fff;border-top:1px solid #A0A0A0;border-left:1px solid #A0A0A0"></div>
<div class="t" style="left:327px;top:228px;width:183px;overflow:hidden;font-weight:bold;">Místní Disk&nbsp; (E:)</div>
<div class="t" style="left:327px;top:243px;width:183px;overflow:hidden;letter-spacing:-0.45px;">232,54 GB NTFS</div>
<div class="t" style="left:327px;top:258px;width:183px;overflow:hidden;">V pořádku</div>
</div>
<div class="a" style="left:200px;top:660px;width:594px;height:1px;background:#fff"></div>
<div class="a" style="left:200px;top:661px;width:593px;height:18px;background:#F0F0F0"></div>
<div class="a" style="left:793px;top:660px;width:1px;height:20px;background:#A0A0A0"></div>
<div class="a" style="left:200px;top:679px;width:594px;height:1px;background:#A0A0A0"></div>
<div class="a" style="left:205px;top:663px;width:12px;height:14px;background:#000;border:1px solid #fff"></div>
<div class="t" style="left:221px;top:662px;">Nepřiřazeno</div>
<div class="a" style="left:290px;top:663px;width:12px;height:14px;background:#000080;border:1px solid #fff"></div>
<div class="t" style="left:306px;top:662px;">Primární oddíl</div>
<div class="a" style="left:386px;top:663px;width:12px;height:14px;background:#808000;border:1px solid #fff"></div>
<div class="t" style="left:402px;top:662px;">Jednoduchý svazek</div>
<div class="a" style="left:794px;top:81px;width:3px;height:600px;background:#F0F0F0"></div>
<div class="a" style="left:796px;top:81px;width:1px;height:600px;background:#fff"></div>
<div class="a" style="left:799px;top:81px;width:190px;height:601px;background:#fff"></div>
<div class="a" style="left:799px;top:81px;width:189px;height:1px;background:#A0A0A0"></div>
<div class="a" style="left:799px;top:81px;width:1px;height:600px;background:#A0A0A0"></div>
<div class="a" style="left:800px;top:82px;width:188px;height:1px;background:#696969"></div>
<div class="a" style="left:800px;top:82px;width:1px;height:598px;background:#696969"></div>
<div class="a" style="left:987px;top:83px;width:1px;height:598px;background:#E3E3E3"></div>
<div class="a" style="left:801px;top:680px;width:187px;height:1px;background:#E3E3E3"></div>
<div class="a" style="left:801px;top:83px;width:186px;height:20px;background:#F0F0F0;border-top:1px solid #fff"></div>
<div class="a" style="left:801px;top:103px;width:186px;height:1px;background:#A0A0A0"></div>
<div class="t" style="left:806px;top:86px;font-weight:bold;font-size:12px">Akce</div>
<div class="a" style="left:801px;top:105px;width:186px;height:25px;background:linear-gradient(#BED4EB,#98B4D6)"></div>
<div class="t" style="left:808px;top:111px;font-size:14.3px;line-height:18px;top:110px;color:#141414;letter-spacing:0">Správa disků</div>
<svg style="left:971px;top:115px" width="10" height="6" viewBox="0 0 10 6"><path d="M0 5.5 L5 0 L10 5.5 Z" fill="#000"/></svg>
<div class="t" style="left:832px;top:134px;letter-spacing:-0.35px">Další akce</div>
<svg style="left:974px;top:137px" width="6" height="10" viewBox="0 0 6 10"><path d="M0 0 L5.5 5 L0 10 Z" fill="#000"/></svg>
<div class="a" style="left:5px;top:682px;width:984px;height:1px;background:#DADADA"></div>
<div class="a" style="left:5px;top:683px;width:984px;height:22px;background:#F0F0F0"></div>
<div class="a" style="left:768px;top:684px;width:1px;height:20px;background:#DCDCDC"></div>
<div class="a" style="left:901px;top:684px;width:1px;height:20px;background:#DCDCDC"></div>
<div class="a" style="left:986px;top:684px;width:1px;height:20px;background:#DCDCDC"></div>
</body></html>
